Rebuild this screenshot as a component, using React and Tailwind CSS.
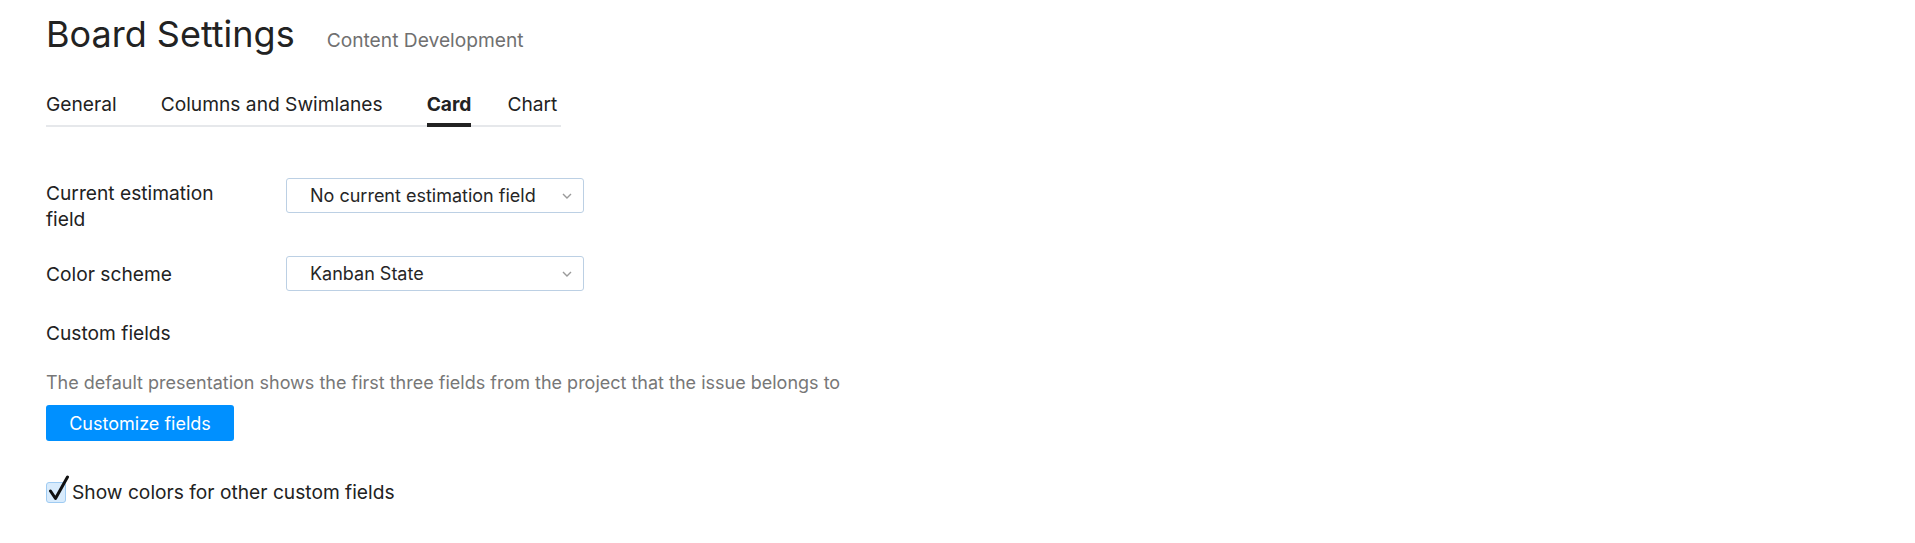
import { useState } from 'react';

const tabs = [
  { name: 'General', gap: '' },
  { name: 'Columns and Swimlanes', gap: 'ml-[44px]' },
  { name: 'Card', gap: 'ml-[44px]' },
  { name: 'Chart', gap: 'ml-[36px]' },
];

function Chevron() {
  return (
    <svg width="10" height="6" viewBox="0 0 10 6" className="text-[#9a9a9a]">
      <path d="M1 1l4 4 4-4" fill="none" stroke="currentColor" strokeWidth="1.4" />
    </svg>
  );
}

function SelectBox({ value }) {
  return (
    <div className="flex h-[35px] w-[298px] items-center justify-between rounded-[3px] border border-[#bcd0e4] bg-white pl-[23px] pr-[11px] text-[18px] text-[#262626]">
      <span>{value}</span>
      <Chevron />
    </div>
  );
}

export default function App() {
  const [active, setActive] = useState('Card');
  const [showColors, setShowColors] = useState(true);

  return (
    <div className="min-h-[543px] bg-white pl-[46px] pt-[12px] font-['Inter',sans-serif] text-[#222]">
      <div className="flex items-baseline">
        <h1 className="text-[36px] leading-[44px] font-normal">Board Settings</h1>
        <span className="ml-[32px] text-[19.2px] text-[#707070]">Content Development</span>
      </div>

      <div className="mt-[36px] flex w-[515px] border-b-2 border-[#e6e8eb] text-[19.2px]">
        {tabs.map((tab) => (
          <button
            key={tab.name}
            onClick={() => setActive(tab.name)}
            className={
              '-mb-[2px] border-b-4 pb-[7px] leading-[24px] ' +
              tab.gap +
              (active === tab.name ? ' border-[#222] font-bold' : ' border-transparent')
            }
          >
            {tab.name}
          </button>
        ))}
      </div>

      <div className="mt-[51px] flex items-start">
        <label className="mt-[2px] w-[175px] text-[19.2px] leading-[26px]">Current estimation field</label>
        <div className="ml-[65px]">
          <SelectBox value="No current estimation field" />
        </div>
      </div>

      <div className="mt-[24px] flex items-center">
        <label className="w-[175px] text-[19.2px] leading-[26px]">Color scheme</label>
        <div className="ml-[65px]">
          <SelectBox value="Kanban State" />
        </div>
      </div>

      <div className="mt-[29px] text-[19.2px] leading-[26px]">Custom fields</div>

      <p className="mt-[25px] text-[18px] leading-[24px] text-[#777]">
        The default presentation shows the first three fields from the project that the issue belongs to
      </p>

      <button className="mt-[10px] h-[36px] w-[188px] rounded-[3px] bg-[#0090ff] text-[18px] text-white">
        Customize fields
      </button>

      <label className="mt-[38px] flex cursor-pointer items-center text-[19.2px] leading-[26px]">
        <span
          onClick={() => setShowColors(!showColors)}
          className="relative h-[21px] w-[20px] rounded-[3px] border border-[#9fcbf2] bg-[#d8ebfc]"
        >
          {showColors && (
            <svg width="22" height="26" viewBox="0 0 22 26" className="absolute left-[1px] -top-[8px]">
              <path d="M2.5 16l5 7.5L19.5 2" fill="none" stroke="#111" strokeWidth="3" strokeLinecap="round" strokeLinejoin="round" />
            </svg>
          )}
        </span>
        <span className="ml-[6px]">Show colors for other custom fields</span>
      </label>
    </div>
  );
}
